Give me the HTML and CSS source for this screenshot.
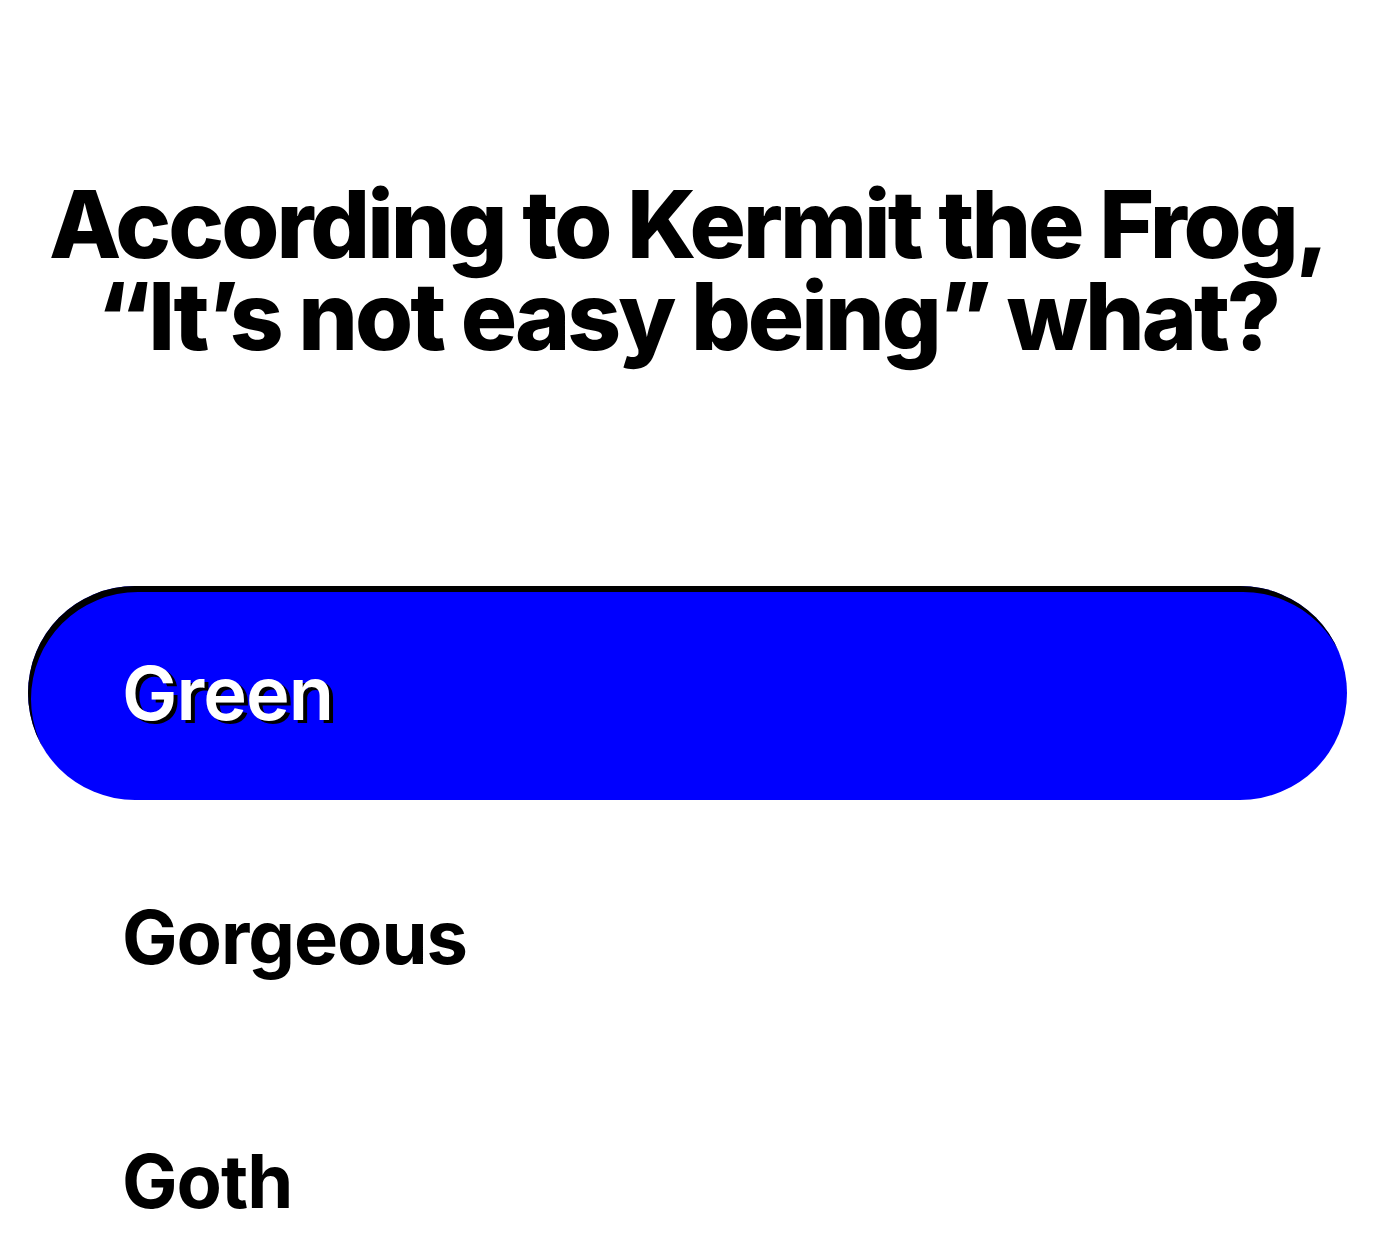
FILE: index.html
```html
<!DOCTYPE html>
<html lang="en">
<head>
<meta charset="utf-8">
<title>Quiz</title>
<link rel="stylesheet" href="styles.css">
</head>
<body>
<main class="quiz">
  <h1 class="question">According to Kermit the Frog,<br>“It’s not easy being” what?</h1>
  <ul class="options">
    <li class="option option--selected"><span class="option__label">Green</span></li>
    <li class="option"><span class="option__label">Gorgeous</span></li>
    <li class="option"><span class="option__label">Goth</span></li>
  </ul>
</main>
</body>
</html>
```
FILE: styles.css
```css
html, body {
  margin: 0;
  padding: 0;
  background: #ffffff;
}

body {
  font-family: Inter, "Noto Sans", sans-serif;
  color: #000000;
}

.quiz {
  display: flex;
  flex-direction: column;
  padding: 178px 30px 0 28px;
}

.question {
  margin: 0;
  text-align: center;
  white-space: nowrap;
  font-size: 94px;
  line-height: 92px;
  font-weight: 800;
  letter-spacing: -3px;
}

.options {
  list-style: none;
  margin: 224px 0 0 0;
  padding: 0;
  display: flex;
  flex-direction: column;
  gap: 30px;
}

.option {
  height: 214px;
  border-radius: 107px;
  display: flex;
  align-items: center;
  padding-left: 94px;
  font-size: 74px;
  font-weight: 700;
  letter-spacing: -1px;
}

.option--selected {
  background: #0000ff;
  color: #ffffff;
  box-shadow: inset 3px 6px 0 #000000;
}

.option--selected .option__label {
  text-shadow: 4px 3px 0 #000000;
  font-weight: 600;
}
```
